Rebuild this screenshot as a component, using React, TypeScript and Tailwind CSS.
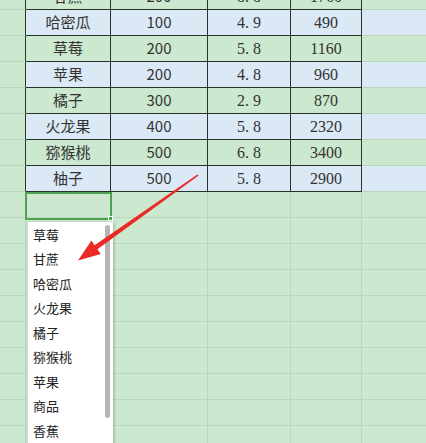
import React from 'react';

const GREEN = 'bg-[#cce8cf]';
const BLUE = 'bg-[#dbe8f5]';

const rows = [
  { name: '甘蔗', qty: '200', price: '8. 8', total: '1760' },
  { name: '哈密瓜', qty: '100', price: '4. 9', total: '490' },
  { name: '草莓', qty: '200', price: '5. 8', total: '1160' },
  { name: '苹果', qty: '200', price: '4. 8', total: '960' },
  { name: '橘子', qty: '300', price: '2. 9', total: '870' },
  { name: '火龙果', qty: '400', price: '5. 8', total: '2320' },
  { name: '猕猴桃', qty: '500', price: '6. 8', total: '3400' },
  { name: '柚子', qty: '500', price: '5. 8', total: '2900' },
];

const options = ['草莓', '甘蔗', '哈密瓜', '火龙果', '橘子', '猕猴桃', '苹果', '商品', '香蕉'];

const cjk = { fontFamily: '"Noto Sans CJK SC", "Noto Sans", sans-serif' };
const serif = { fontFamily: '"Liberation Serif", "Noto Sans CJK SC", serif' };

function TableRow({ row, index }: { row: (typeof rows)[number]; index: number }) {
  const bg = index % 2 === 1 ? BLUE : GREEN;
  return (
    <div className="flex h-[26px] text-[#333]">
      <div className={`w-[26px] shrink-0 border-r border-r-[#26352a] border-b border-b-[#b9d7bc] ${GREEN}`} />
      <div className={`w-[85px] shrink-0 border-r border-b border-[#26352a] flex items-center justify-center text-[15px] ${bg}`} style={cjk}>
        {row.name}
      </div>
      <div className={`w-[97px] shrink-0 border-r border-b border-[#26352a] flex items-center justify-center text-[15px] ${bg}`} style={cjk}>
        {row.qty}
      </div>
      <div className={`w-[83px] shrink-0 border-r border-b border-[#26352a] flex items-center justify-center text-[16px] ${bg}`} style={serif}>
        {row.price}
      </div>
      <div className={`w-[71px] shrink-0 border-r border-b border-[#26352a] flex items-center justify-center text-[16px] ${bg}`} style={serif}>
        {row.total}
      </div>
      <div className={`flex-1 border-b border-b-[#b9d7bc] ${bg}`} />
    </div>
  );
}

function EmptyRow() {
  return (
    <div className={`flex h-[26px] ${GREEN}`}>
      <div className="w-[26px] shrink-0 border-r border-b border-[#b9d7bc]" />
      <div className="w-[85px] shrink-0 border-r border-b border-[#b9d7bc]" />
      <div className="w-[97px] shrink-0 border-r border-b border-[#b9d7bc]" />
      <div className="w-[83px] shrink-0 border-r border-b border-[#b9d7bc]" />
      <div className="w-[71px] shrink-0 border-r border-b border-[#b9d7bc]" />
      <div className="flex-1 border-b border-[#b9d7bc]" />
    </div>
  );
}

export default function App() {
  return (
    <div className={`relative w-[426px] h-[443px] overflow-hidden ${GREEN}`}>
      <div className="-mt-[16px]">
        {rows.map((r, i) => (
          <TableRow key={r.name} row={r} index={i} />
        ))}
        {Array.from({ length: 10 }).map((_, i) => (
          <EmptyRow key={i} />
        ))}
      </div>

      {/* selected cell */}
      <div className="absolute left-[25px] top-[192px] w-[87px] h-[28px] border-2 border-[#4fa24f]" />
      <div className="absolute left-[108px] top-[216px] w-[5px] h-[5px] bg-[#4fa24f] border border-white" />

      {/* dropdown list */}
      <div className="absolute left-[27px] top-[222px] w-[86px] h-[240px] bg-white border-l border-[#d6d6d6] shadow-[1px_1px_3px_rgba(0,0,0,0.25)]">
        <div className="flex flex-col">
          {options.map((o) => (
            <div key={o} className="h-[24.5px] pl-[5px] flex items-center text-[13px] text-[#222]" style={cjk}>
              {o}
            </div>
          ))}
        </div>
        <div className="absolute right-[3px] top-[3px] w-[5px] h-[193px] rounded-[3px] bg-[#b6b6b6]" />
      </div>

      {/* red arrow */}
      <svg className="absolute left-0 top-0 pointer-events-none" width="426" height="443" viewBox="0 0 426 443">
        <polygon
          points="197.4,174.4 198.6,175.6 97.4,249.3 100.8,254 78,260.5 91.4,240.6 94.6,245.2"
          fill="#ea2a24"
        />
      </svg>
    </div>
  );
}
